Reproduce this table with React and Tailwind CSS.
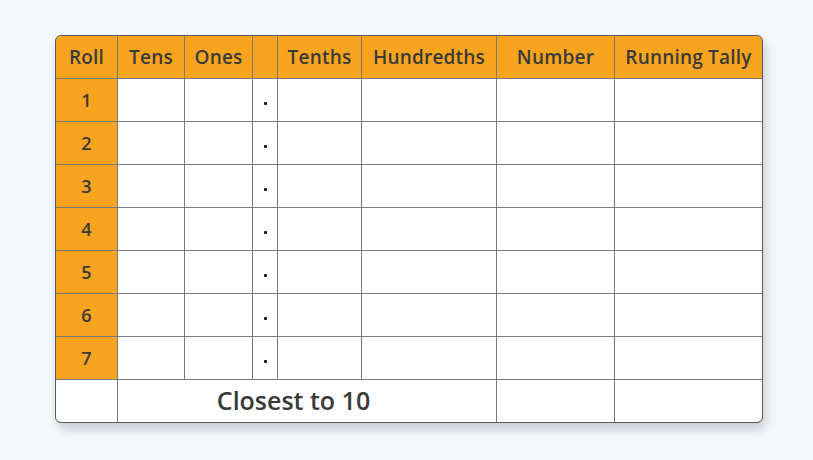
import React from 'react'

const headers = ["Roll", "Tens", "Ones", "", "Tenths", "Hundredths", "Number", "Running Tally"]
const rolls = [1, 2, 3, 4, 5, 6, 7]

const App = () => {
  return (
    <div className="w-[813px] h-[460px] bg-[#f3f8fa] pl-[55px] pt-[35px]" style={{ fontFamily: '"Open Sans", "Lato", sans-serif' }}>
      <div className="w-[708px] rounded-md border border-[#5a5a5a] overflow-hidden shadow-[3px_7px_10px_rgba(60,70,90,0.22)] bg-[#7c7c7c]">
        <div className="grid grid-cols-[61px_66px_67px_24px_83px_134px_117px_147px] auto-rows-[42px] gap-px">
          {headers.map((h, i) => (
            <div key={i} className="bg-[#f9a41e] flex items-center justify-center text-[19px] font-semibold tracking-[0.2px] text-[#3a3a3a]">
              {h}
            </div>
          ))}

          {rolls.map((n) => (
            <React.Fragment key={n}>
              <div className="bg-[#f9a41e] flex items-center justify-center text-[18px] font-semibold text-[#3a3a3a]">{n}</div>
              <div className="bg-white" />
              <div className="bg-white" />
              <div className="bg-white flex items-center justify-center pt-[6px]">
                <span className="w-[3px] h-[3px] rounded-[1px] bg-[#111]" />
              </div>
              <div className="bg-white" />
              <div className="bg-white" />
              <div className="bg-white" />
              <div className="bg-white" />
            </React.Fragment>
          ))}

          <div className="bg-white" />
          <div className="col-span-5 bg-white flex items-center justify-center pr-[27px] text-[25px] font-semibold text-[#3a3a3a]">
            Closest to 10
          </div>
          <div className="bg-white" />
          <div className="bg-white" />
        </div>
      </div>
    </div>
  )
}

export default App
